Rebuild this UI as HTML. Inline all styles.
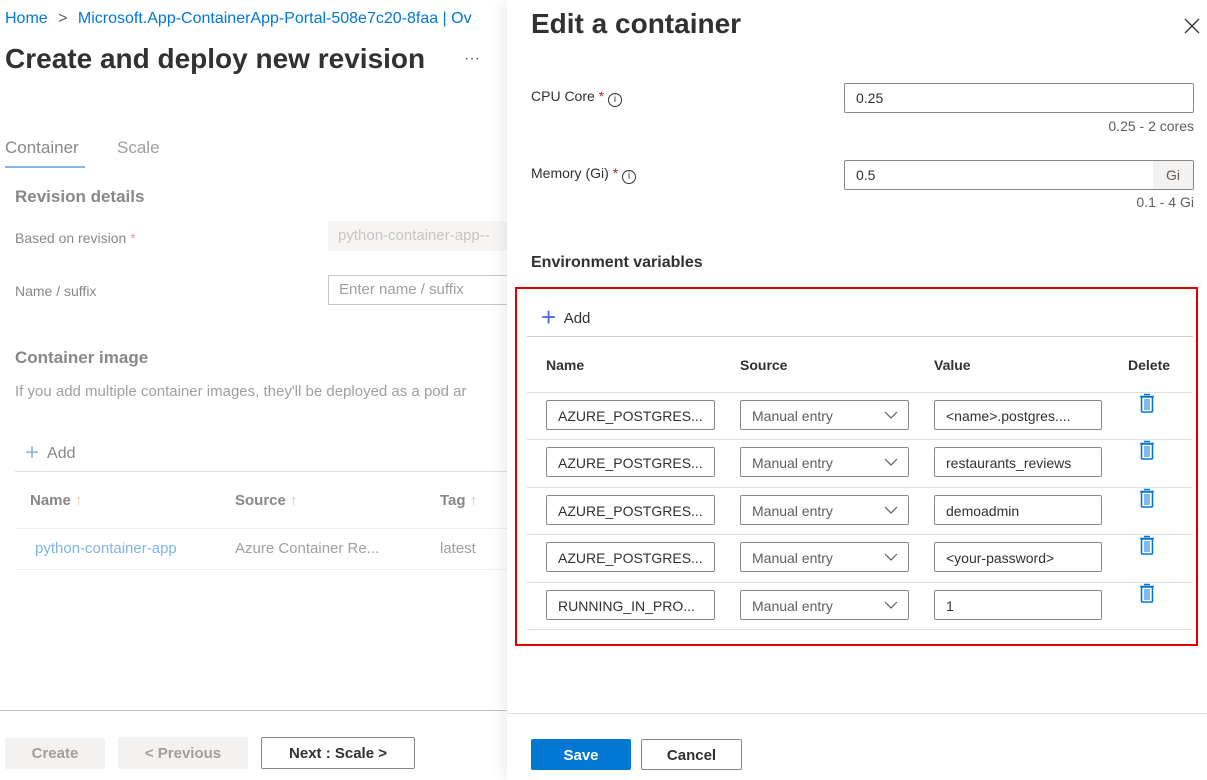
<!DOCTYPE html>
<html><head><meta charset="utf-8"><style>
*{box-sizing:border-box;margin:0;padding:0}
body{width:1207px;height:780px;overflow:hidden;background:#fff;font-family:"Segoe UI","Liberation Sans",sans-serif;color:#323130;position:relative}
.a{position:absolute;white-space:nowrap}
.inp{position:absolute;border:1px solid #8a8886;border-radius:2px;background:#fff;font-size:14px;padding-left:11px;display:flex;align-items:center;color:#323130;overflow:hidden}
.hl{position:absolute;height:1px;background:#e1dfdd}
</style></head><body>
<!-- left page -->
<div class="a" style="left:5px;top:10px;font-size:16px;color:#0078d4">Home <span style="color:#605e5c;margin:0 6px">&gt;</span> Microsoft.App-ContainerApp-Portal-508e7c20-8faa | Ov</div>
<div class="a" style="left:5px;top:43px;font-size:28px;font-weight:600;color:#323130">Create and deploy new revision</div>
<div class="a" style="left:464px;top:50px;font-size:16px;color:#605e5c">···</div>
<div class="a" style="left:5px;top:138px;font-size:17px;color:#8a8886">Container</div>
<div class="a" style="left:5px;top:166px;width:80px;height:2px;background:#8ab8e6"></div>
<div class="a" style="left:117px;top:138px;font-size:17px;color:#a19f9d">Scale</div>
<div class="a" style="left:15px;top:187px;font-size:17px;font-weight:600;color:#8a8886">Revision details</div>
<div class="a" style="left:15px;top:230px;font-size:14px;color:#8a8886">Based on revision <span style="color:#e0a0a8">*</span></div>
<div class="a" style="left:328px;top:221px;width:180px;height:30px;background:#f6f5f4;font-size:15px;color:#c8c6c4;padding:6px 10px">python-container-app--</div>
<div class="a" style="left:15px;top:283px;font-size:14px;color:#8a8886">Name / suffix</div>
<div class="a" style="left:328px;top:275px;width:180px;height:30px;border:1px solid #c8c6c4;font-size:15px;color:#a19f9d;padding:5px 10px">Enter name / suffix</div>
<div class="a" style="left:15px;top:348px;font-size:17px;font-weight:600;color:#8a8886">Container image</div>
<div class="a" style="left:15px;top:383px;font-size:15px;color:#a19f9d">If you add multiple container images, they'll be deployed as a pod ar</div>
<div class="a" style="left:25px;top:437px;font-size:16px;color:#8a8886"><span style="color:#9ab9e0;font-size:24px;font-weight:300;position:relative;top:2px">+</span>&nbsp; Add</div>
<div class="hl" style="left:15px;top:471px;width:492px"></div>
<div class="a" style="left:30px;top:492px;font-size:15px;font-weight:600;color:#8a8886">Name <span style="color:#e8c8a0;font-weight:400">↑</span></div>
<div class="a" style="left:235px;top:492px;font-size:15px;font-weight:600;color:#8a8886">Source <span style="color:#c8c6c4;font-weight:400">↑</span></div>
<div class="a" style="left:440px;top:492px;font-size:15px;font-weight:600;color:#8a8886">Tag <span style="color:#e8c8a0;font-weight:400">↑</span></div>
<div class="hl" style="left:15px;top:528px;width:492px;background:#f0efee"></div>
<div class="a" style="left:35px;top:540px;font-size:15px;color:#7fb4e6">python-container-app</div>
<div class="a" style="left:235px;top:540px;font-size:15px;color:#a19f9d">Azure Container Re...</div>
<div class="a" style="left:440px;top:540px;font-size:15px;color:#a19f9d">latest</div>
<div class="hl" style="left:15px;top:569px;width:492px;background:#f0efee"></div>
<div class="hl" style="left:0;top:710px;width:507px;background:#c8c6c4"></div>
<div class="a" style="left:5px;top:738px;width:100px;height:31px;background:#f3f2f1;border-radius:2px;font-size:15px;font-weight:600;color:#a19f9d;text-align:center;line-height:31px">Create</div>
<div class="a" style="left:118px;top:737px;width:130px;height:32px;background:#f3f2f1;border-radius:2px;font-size:15px;font-weight:600;color:#a19f9d;text-align:center;line-height:33px">&lt; Previous</div>
<div class="a" style="left:261px;top:737px;width:154px;height:32px;border:1px solid #8a8886;border-radius:2px;font-size:15px;font-weight:600;color:#323130;text-align:center;line-height:31px">Next : Scale &gt;</div>
<!-- panel -->
<div class="a" style="left:507px;top:0;width:700px;height:780px;background:#fff;box-shadow:-6px 0 12px rgba(0,0,0,.06)"></div>
<div class="a" style="left:531px;top:8px;font-size:28px;font-weight:600;color:#323130">Edit a container</div>
<svg class="a" style="left:1184px;top:18px" width="16" height="16" viewBox="0 0 16 16"><path d="M1 1L15 15M15 1L1 15" stroke="#323130" stroke-width="1.3"/></svg>
<div class="a" style="left:531px;top:88px;font-size:14px">CPU Core <span style="color:#a4262c">*</span> <span style="display:inline-block;width:14px;height:14px;border:1px solid #323130;border-radius:50%;font-size:10px;text-align:center;line-height:12px;vertical-align:-1px">i</span></div>
<div class="inp" style="left:844px;top:83px;width:350px;height:30px">0.25</div>
<div class="a" style="left:1000px;top:118px;width:194px;text-align:right;font-size:14px;color:#605e5c">0.25 - 2 cores</div>
<div class="a" style="left:531px;top:165px;font-size:14px">Memory (Gi) <span style="color:#a4262c">*</span> <span style="display:inline-block;width:14px;height:14px;border:1px solid #323130;border-radius:50%;font-size:10px;text-align:center;line-height:12px;vertical-align:-1px">i</span></div>
<div class="inp" style="left:844px;top:160px;width:350px;height:30px">0.5</div>
<div class="a" style="left:1153px;top:161px;width:40px;height:28px;background:#f3f2f1;font-size:14px;color:#605e5c;text-align:center;line-height:28px">Gi</div>
<div class="a" style="left:1000px;top:194px;width:194px;text-align:right;font-size:14px;color:#605e5c">0.1 - 4 Gi</div>
<div class="a" style="left:531px;top:254px;font-size:16px;font-weight:600">Environment variables</div>
<div class="a" style="left:515px;top:287px;width:683px;height:359px;border:2px solid #e00000"></div>
<div class="a" style="left:541px;top:299px;font-size:15px"><span style="color:#4f6bed;font-size:26px;font-weight:300;position:relative;top:3px">+</span>&nbsp; Add</div>
<div class="hl" style="left:527px;top:336px;width:666px;background:#d2d0ce"></div>
<div class="a" style="left:546px;top:357px;font-size:14px;font-weight:600">Name</div>
<div class="a" style="left:740px;top:357px;font-size:14px;font-weight:600">Source</div>
<div class="a" style="left:934px;top:357px;font-size:14px;font-weight:600">Value</div>
<div class="a" style="left:1128px;top:357px;font-size:14px;font-weight:600">Delete</div>
<div id="rows"></div>
<script>
var rows=[["AZURE_POSTGRES...","<name>.postgres...."],["AZURE_POSTGRES...","restaurants_reviews"],["AZURE_POSTGRES...","demoadmin"],["AZURE_POSTGRES...","<your-password>"],["RUNNING_IN_PRO...","1"]];
var h="",ys=[392,439,487,534,582];
rows.forEach(function(r,i){var y=ys[i];
h+='<div class="hl" style="left:527px;top:'+y+'px;width:666px"></div>';
h+='<div class="inp" style="left:546px;top:'+(y+8)+'px;width:169px;height:30px;padding-top:2px">'+r[0].replace(/</g,"&lt;")+'</div>';
h+='<div class="inp" style="left:740px;top:'+(y+8)+'px;width:169px;height:30px;color:#605e5c;padding-top:2px">Manual entry<svg style="position:absolute;right:10px;top:10px" width="14" height="9" viewBox="0 0 14 9"><path d="M1 1L7 7L13 1" stroke="#605e5c" fill="none" stroke-width="1.2"/></svg></div>';
h+='<div class="inp" style="left:934px;top:'+(y+8)+'px;width:168px;height:30px;padding-top:2px">'+r[1].replace(/</g,"&lt;").replace(/>/g,"&gt;")+'</div>';
h+='<svg class="a" style="left:1138px;top:'+(y+1)+'px" width="18" height="21" viewBox="0 0 18 21"><path d="M6 1.5h6M2 3.5h14" stroke="#0078d4" stroke-width="1.6"/><rect x="3.5" y="4" width="11" height="15" rx="1" fill="none" stroke="#0078d4" stroke-width="1.6"/><path d="M7 6v11M9 6v11M11 6v11" stroke="#0078d4" stroke-width="1"/></svg>';
});
h+='<div class="hl" style="left:527px;top:629px;width:666px"></div>';
document.getElementById("rows").innerHTML=h;
</script>
<div class="hl" style="left:507px;top:713px;width:700px;background:#e1dfdd"></div>
<div class="a" style="left:531px;top:739px;width:100px;height:31px;background:#0078d4;border-radius:2px;color:#fff;font-size:15px;font-weight:600;text-align:center;line-height:33px">Save</div>
<div class="a" style="left:641px;top:739px;width:101px;height:31px;border:1px solid #8a8886;border-radius:2px;font-size:15px;font-weight:600;text-align:center;line-height:31px">Cancel</div>
</body></html>
